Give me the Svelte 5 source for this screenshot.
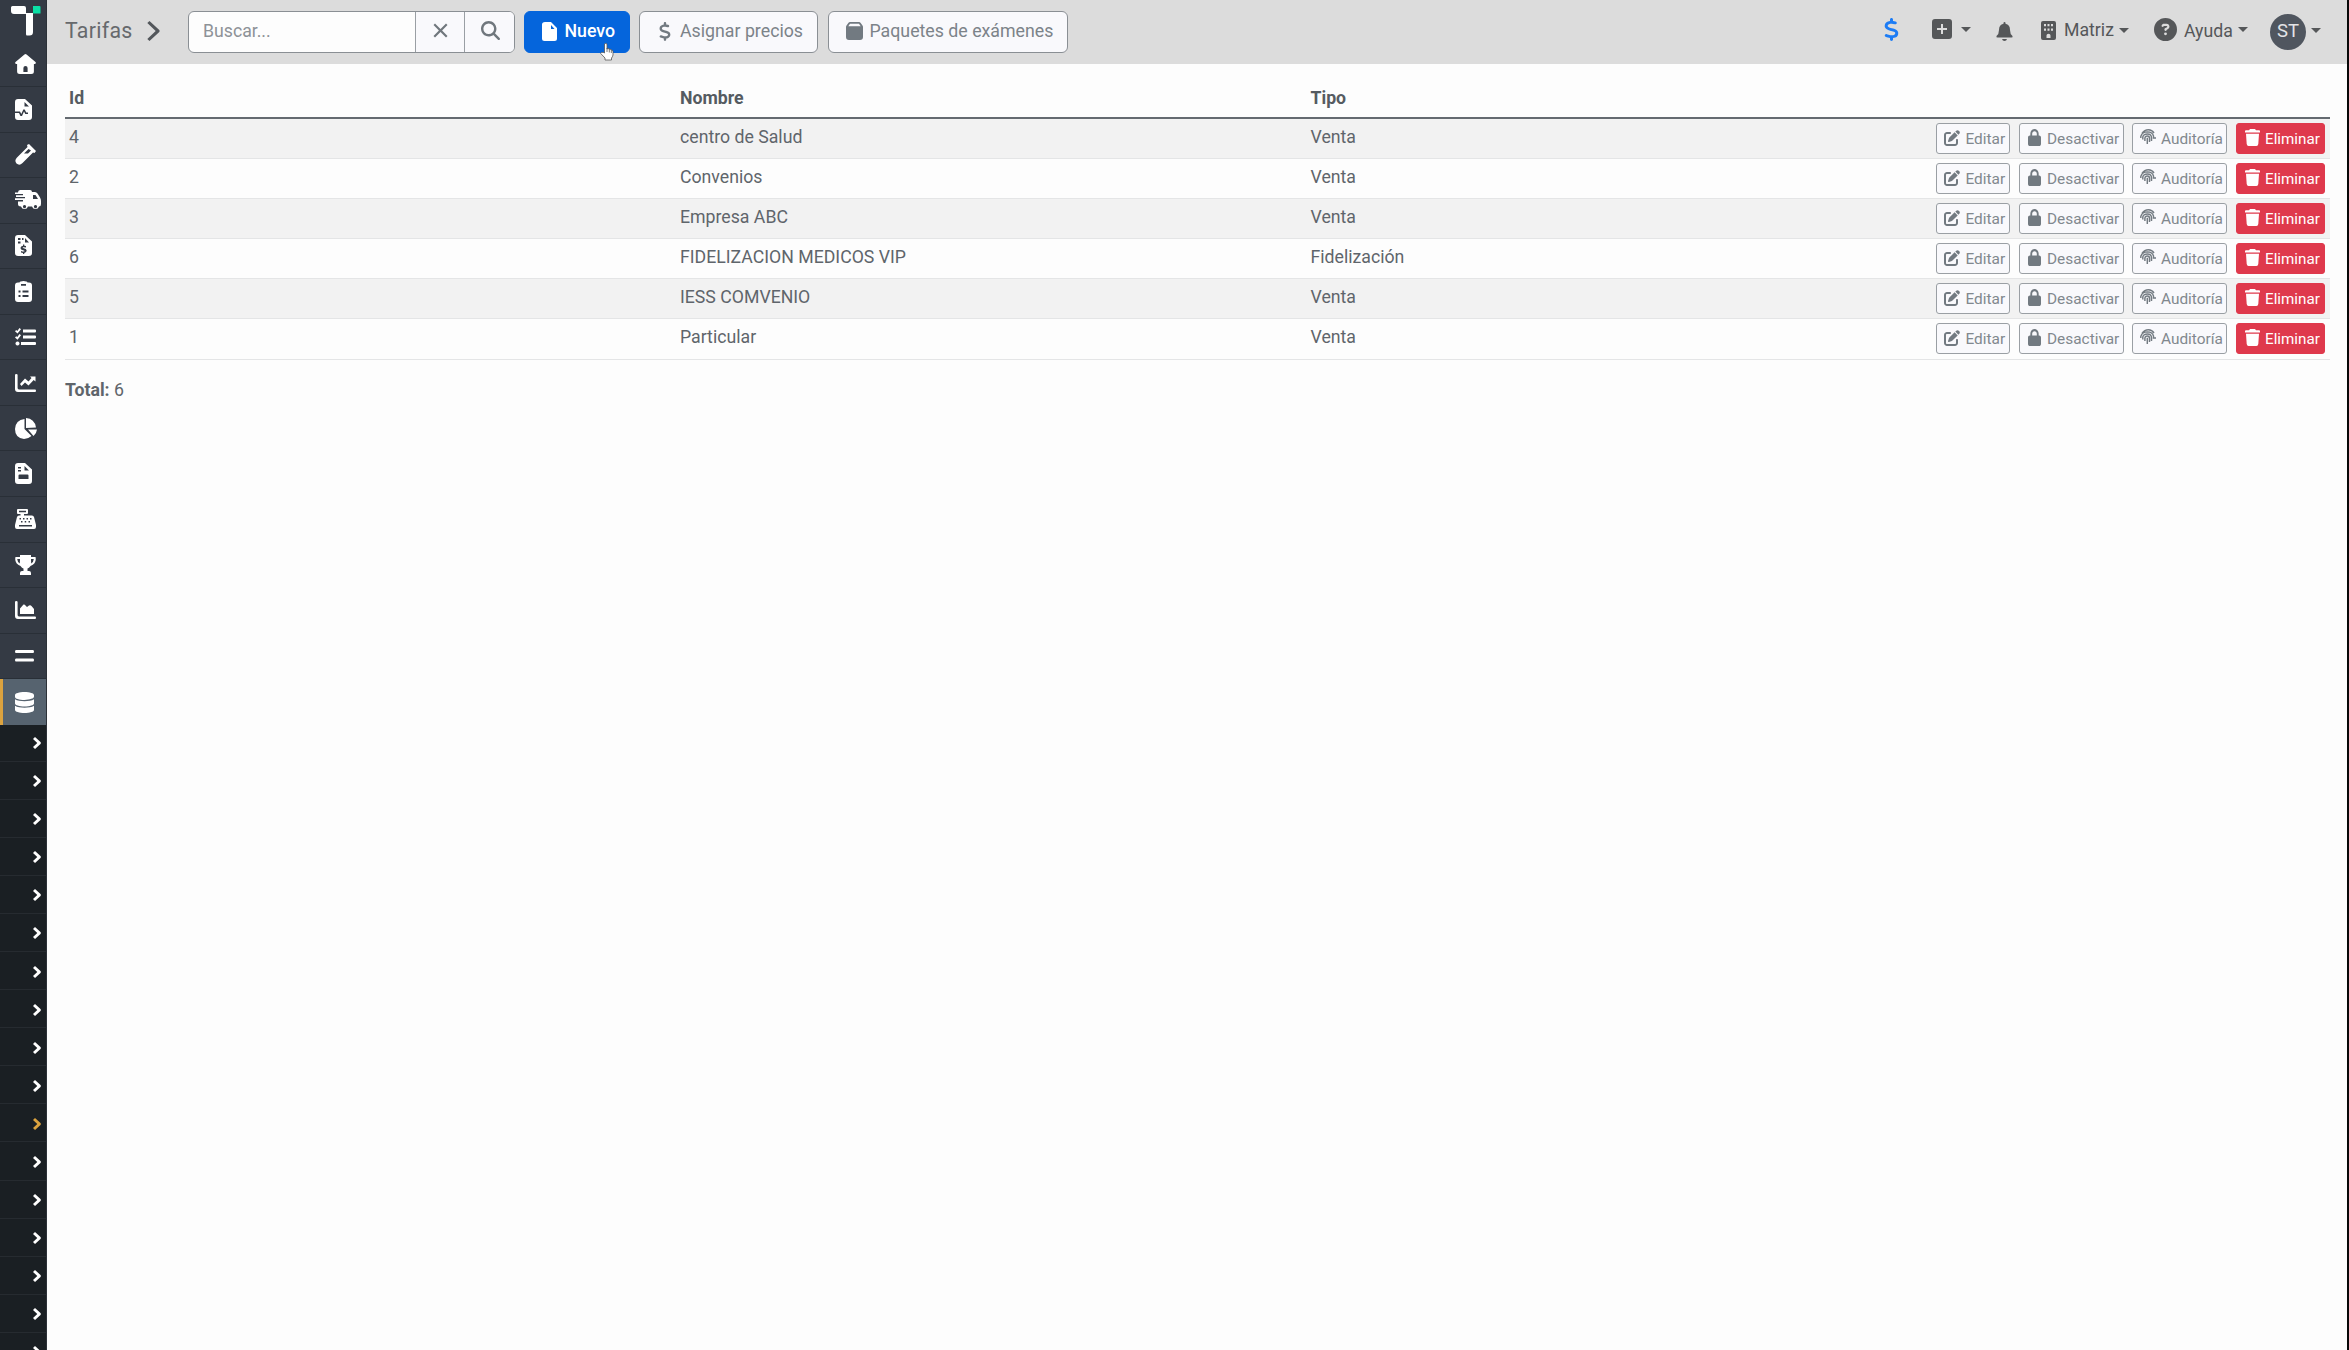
<script>
  const icons = {
    home: ['0 0 20 20', 'M9 .5Q10 -.4 11 .5L19.5 8Q20.5 9.4 19 10H18V17.500Q18 20 15.500 20H4.500Q2 20 2 17.500V10H1Q-.5 9.400 .5 8ZM8 18H12V14Q12 12 10 12T8 14Z'],
    filePulse: ['0 0 17 21', 'M3 0H10L17 6.500V18Q17 21 14 21H3Q0 21 0 18V14H4L5.500 17H7L9 12.500L10.300 15H13V13.500H11.200L9.700 10.500H8.300L6.300 15L5 12.500H0V3Q0 0 3 0ZM9.500 3V7.500H14Z'],
    vial: ['0 0 21 21', 'M12 1L14 0L21 7L19.500 9L18 8.500L7.500 19Q4.500 22 1.500 19.500Q-1 16.500 2 13.500L12.500 3ZM13.500 5L9 9.500H13L16 6.500Z'],
    truck: ['0 0 26 20', 'M5 0H15Q17 0 17 2H20Q21.500 2 22.500 3.500L25 7.500Q26 9 26 11V14Q26 16.500 24 16.500A3.700 3.700 0 0 1 17 16.500H13A3.700 3.700 0 0 1 6 16.500Q3 16.500 3 14V11.500H8V10H0V8.300H10V7H1V5.300H8V4H0V2.500H3Q3 0 5 0ZM18 5V9H23L20.500 5ZM9.500 15A1.600 1.600 0 1 0 9.510 15ZM20.500 15A1.600 1.600 0 1 0 20.510 15Z'],
    invoice: ['0 0 17 21', 'M3 0H10L17 6.500V18Q17 21 14 21H3Q0 21 0 18V3Q0 0 3 0ZM3 3V5H5.500V3ZM7 3V5H8.500V3ZM3 6.500V8.500H5.500V6.500ZM10 3V7.500H14ZM8 9.500V10.700Q5.500 11 5.500 13Q5.500 14.700 8 15.200Q10 15.600 9.500 16.200Q8.500 17 6 16V17.600L8 18V19H9.300V18Q11.700 17.600 11.700 15.600Q11.500 13.800 8.700 13.300Q7 12.700 8 12.300Q9 12 11 12.500V11L9.300 10.700V9.500Z'],
    clipboard: ['0 0 17 21', 'M4.500 1.500Q5 0 8.500 0T12.500 1.500H14Q17 1.500 17 4.500V18Q17 21 14 21H3Q0 21 0 18V4.500Q0 1.500 3 1.500ZM6 3V4.800H11V3ZM3.500 9.500V11.500H5.500V9.500ZM7.500 9.500V11.500H13.500V9.500ZM3.500 14V16H5.500V14ZM7.500 14V16H13.500V14Z'],
    tasks: ['0 0 21 18', 'M4.500 0L6 1.300L2.500 5.500L0 3.300L1.200 2L2.300 3ZM4.500 6L6 7.300L2.500 11.800L0 9.500L1.200 8.200L2.300 9ZM8 1.500H20Q21 1.500 21 2.500V3.500Q21 4.500 20 4.500H8ZM8 7.500H20Q21 7.500 21 8.500V9.500Q21 10.500 20 10.500H8ZM6 14H20Q21 14 21 15V16Q21 17 20 17H6ZM2.500 13.500A2 2 0 1 0 2.510 13.500Z'],
    chartLine: ['0 0 21 18', 'M0 1Q0 0 1.300 0T2.600 1V14Q2.600 15.400 4 15.400H20Q21 15.400 21 16.700T20 18H3Q0 18 0 15ZM5 10L10 4.500L13.500 7.500L16.500 4L15 2.500H20.500V7.500L18.700 6L13.500 11.500L10 8.500L6.500 12Z'],
    pie: ['0 0 22 21', 'M9.500 1V11L16.500 18Q13 21 9 21Q0 20 0 11Q.5 2 9.500 1ZM11 0Q19.500 .5 21 9.500L11 10ZM13 11.500H22Q21.500 15.500 18.500 18Z'],
    fileBox: ['0 0 17 21', 'M3 0H10L17 6.500V18Q17 21 14 21H3Q0 21 0 18V3Q0 0 3 0ZM3 4V5.500H6V4ZM3 7V8.500H6V7ZM9.500 3V7.500H14ZM4.500 11.500Q3.500 11.500 3.500 12.500V16H13.500V12.500Q13.500 11.500 12.500 11.500Z'],
    register: ['0 0 21 20', 'M3 0H12Q13 0 13 1V4Q13 5 12 5H9V6.500H17Q18.500 6.500 19 8L21 16V18Q21 20 19 20H2Q0 20 0 18V16L2 8Q2.500 6.500 4 6.500H5.500V5H3Q2 5 2 4V1Q2 0 3 0ZM4 1.800V3.200H11V1.800ZM4.500 9V10.500H6V9ZM8 9V10.500H9.500V9ZM11.500 9V10.500H13V9ZM15 9V10.500H16.500V9ZM6 12V13.500H7.500V12ZM9.700 12V13.500H11.200V12ZM13.500 12V13.500H15V12ZM4 16V17.500H17V16Z'],
    trophy: ['0 0 21 20', 'M5 0H16V2H20.500Q22 8 15.500 11Q14 13 12.500 13.500V16H14Q16 16 16 18V20H5V18Q5 16 7 16H8.500V13.500Q7 13 5.500 11Q-1 8 .5 2H5ZM2.200 4Q2.400 7 4.800 8.400Q5 6 5 4ZM18.800 4H16Q16 6 16.200 8.400Q18.600 7 18.800 4Z'],
    area: ['0 0 21 18', 'M0 1Q0 0 1.300 0T2.600 1V14Q2.600 15.400 4 15.400H20Q21 15.400 21 16.700T20 18H3Q0 18 0 15ZM5 13V7.500L8.500 3.500Q9.500 3 10.500 4.500L12 6L14 4.500Q15.500 3.800 16.500 5L19 8V13Z'],
    equals: ['0 0 19 12', 'M1 0H18Q19 0 19 1.500T18 3H1Q0 3 0 1.500T1 0ZM1 8.500H18Q19 8.500 19 10T18 11.500H1Q0 11.500 0 10T1 8.500Z'],
    database: ['0 0 448 512', 'M448 73.100v45.700C448 159.100 347.700 192 224 192S0 159.100 0 118.900V73.100C0 32.900 100.300 0 224 0s224 32.900 224 73.100zM448 176v102.900C448 319.100 347.700 352 224 352S0 319.100 0 278.900V176c48.100 33.100 136.200 48.600 224 48.600S399.900 209.100 448 176zm0 160v102.900C448 479.100 347.700 512 224 512S0 479.100 0 438.900V336c48.100 33.100 136.200 48.600 224 48.600S399.900 369.100 448 336z'],
    dollar: ['0 0 320 512', 'M160 0c17.700 0 32 14.300 32 32V67.700c1.600 .2 3.100 .4 4.700 .7c.4 .1 .7 .1 1.100 .2l48 8.800c17.400 3.200 28.900 19.900 25.700 37.200s-19.900 28.900-37.200 25.700l-47.500-8.700c-31.300-4.600-58.900-1.500-78.300 6.200s-27.200 18.300-29 28.100c-2 10.700-.5 16.700 1.200 20.400c1.800 3.900 5.500 8.300 12.800 13.200c16.300 10.700 41.300 17.700 73.700 26.300l2.900 .8c28.600 7.600 63.600 16.800 89.600 33.800c14.200 9.300 27.600 21.900 35.900 39.500c8.500 17.900 10.300 37.900 6.400 59.200c-6.900 38-33.100 63.400-65.600 76.700c-13.700 5.600-28.600 9.200-44.400 11V480c0 17.700-14.300 32-32 32s-32-14.300-32-32V445.100c-24.400-3.800-66-14.500-93-26.500c-16.100-7.200-23.400-26.100-16.200-42.200s26.100-23.400 42.200-16.200c20.900 9.300 55.300 18.500 75.200 21.600c31.900 4.700 58.200 2 76-5.300c16.900-6.900 24.600-16.900 26.800-28.900c1.900-10.600 .4-16.700-1.300-20.400c-1.900-4-5.600-8.400-13-13.300c-16.400-10.700-41.500-17.700-74-26.300l-2.800-.7C119.400 279.300 84.400 270 58.400 253c-14.200-9.300-27.500-22-35.800-39.600c-8.400-17.900-10.100-37.900-6.100-59.200C23.700 116 52.300 91.200 84.800 78.300c13.300-5.300 27.900-8.900 43.200-11V32c0-17.700 14.300-32 32-32z'],
    search: ['0 0 512 512', 'M416 208c0 45.900-14.900 88.300-40 122.700L502.600 457.400c12.500 12.500 12.500 32.800 0 45.300s-32.800 12.500-45.300 0L330.700 376c-34.400 25.200-76.800 40-122.700 40C93.100 416 0 322.900 0 208S93.100 0 208 0S416 93.100 416 208zM208 352a144 144 0 1 0 0-288 144 144 0 1 0 0 288z'],
    times: ['0 0 15 15', 'M2 .5L7.500 5.900L13 .5L14.500 2L9.100 7.500L14.500 13L13 14.500L7.500 9.100L2 14.500L.5 13L5.900 7.500L.5 2Z'],
    chevron: ['0 0 13 20', 'M2.500 0L12.300 9Q13 10 12.300 11L2.500 20L.3 18L8.700 10L.3 2Z'],
    small: ['0 0 8 12', 'M2 0L7.500 5Q8.200 6 7.500 7L2 12L0 10L4.300 6L0 2Z'],
    file: ['0 0 15 19', 'M3 0H9L15 6V16.500Q15 19 12.500 19H2.500Q0 19 0 16.500V2.500Q0 0 3 0ZM9 3V7H12.500Z'],
    box: ['0 0 17 18', 'M4 0H13Q14 0 14.700 1L16.500 3.500Q17 4 17 5V15Q17 18 14 18H3Q0 18 0 15V5Q0 4 .5 3.500L2.300 1Q3 0 4 0ZM4 1.800L2.300 4.200H14.700L13 1.800Z'],
    plus: ['0 0 20 20', 'M3 0H17Q20 0 20 3V17Q20 20 17 20H3Q0 20 0 17V3Q0 0 3 0ZM9 5V9H5V11H9V15H11V11H15V9H11V5Z'],
    bell: ['0 0 17 19', 'M7.500 1Q7.500 0 8.500 0T9.500 1V1.700Q14 2.500 14 8Q14 12 16.500 14Q17 15.500 15.500 15.500H1.500Q0 15.500 .5 14Q3 12 3 8Q3 2.500 7.500 1.700ZM6 17H11Q10.500 19 8.500 19T6 17Z'],
    building: ['0 0 15 19', 'M2 0H13Q15 0 15 2V17Q15 19 13 19H2Q0 19 0 17V2Q0 0 2 0ZM3 3V5.200H5V3ZM6.500 3V5.200H8.500V3ZM10 3V5.200H12V3ZM3 7.500V9.700H5V7.500ZM6.500 7.500V9.700H8.500V7.500ZM10 7.500V9.700H12V7.500ZM5.500 17H9.500V14.500Q9.500 12.800 7.500 12.800T5.500 14.500Z'],
    help: ['0 0 512 512', 'M256 0a256 256 0 1 0 0 512A256 256 0 1 0 256 0zM169.800 165.300c7.900-22.300 29.100-37.300 52.800-37.300h58.300c34.900 0 63.100 28.300 63.100 63.100c0 22.600-12.100 43.500-31.700 54.800L280 264.400c-.2 13-10.900 23.600-24 23.600c-13.300 0-24-10.700-24-24V250.500c0-8.600 4.600-16.500 12.100-20.800l44.300-25.400c4.700-2.700 7.600-7.700 7.600-13.100c0-8.400-6.800-15.100-15.100-15.100H222.600c-3.400 0-6.400 2.100-7.500 5.300l-.4 1.200c-4.400 12.500-18.200 19-30.600 14.600s-19-18.200-14.600-30.600zM256 320a32 32 0 1 0 0 64 32 32 0 1 0 0-64z'],
    edit: ['0 0 512 512', 'M471.600 21.700c-21.900-21.900-57.300-21.900-79.200 0L362.300 51.700l97.900 97.900 30.100-30.100c21.900-21.900 21.900-57.300 0-79.200L471.600 21.700zm-299.200 220c-6.100 6.100-10.800 13.600-13.500 21.900l-29.600 88.800c-2.900 8.600-.6 18.100 5.800 24.600s15.900 8.700 24.600 5.800l88.800-29.600c8.200-2.700 15.700-7.400 21.900-13.500L437.700 172.300 339.700 74.300 172.400 241.700zM96 64C43 64 0 107 0 160V416c0 53 43 96 96 96H352c53 0 96-43 96-96V320c0-17.700-14.300-32-32-32s-32 14.300-32 32v96c0 17.700-14.300 32-32 32H96c-17.700 0-32-14.300-32-32V160c0-17.700 14.300-32 32-32h96c17.700 0 32-14.300 32-32s-14.300-32-32-32H96z'],
    lock: ['0 0 448 512', 'M144 144v48H304V144c0-44.200-35.800-80-80-80s-80 35.800-80 80zM80 192V144C80 64.500 144.500 0 224 0s144 64.500 144 144v48h16c35.300 0 64 28.700 64 64V448c0 35.300-28.700 64-64 64H64c-35.300 0-64-28.700-64-64V256c0-35.300 28.700-64 64-64H80z'],
    trash: ['0 0 15 17', 'M5 0H10L11 1.300H14Q15 1.300 15 2.300V3.500H0V2.300Q0 1.300 1 1.300H4ZM1 4.700H14L13.300 15Q13 17 11.500 17H3.500Q2 17 1.700 15Z']
  }

  const menu = [
    ['home', 21, 20], ['filePulse', 17, 21], ['vial', 21, 21], ['truck', 26, 20],
    ['invoice', 17, 21], ['clipboard', 17, 21], ['tasks', 21, 18], ['chartLine', 21, 18],
    ['pie', 22, 21], ['fileBox', 17, 21], ['register', 21, 20], ['trophy', 21, 20],
    ['area', 21, 18], ['equals', 19, 12], ['database', 19, 21]
  ]
  const rows = [
    { id: 4, nombre: 'centro de Salud', tipo: 'Venta' },
    { id: 2, nombre: 'Convenios', tipo: 'Venta' },
    { id: 3, nombre: 'Empresa ABC', tipo: 'Venta' },
    { id: 6, nombre: 'FIDELIZACION MEDICOS VIP', tipo: 'Fidelización' },
    { id: 5, nombre: 'IESS COMVENIO', tipo: 'Venta' },
    { id: 1, nombre: 'Particular', tipo: 'Venta' }
  ]
  let search = $state('')
</script>

{#snippet icon(name, w, h)}
  <svg class="icon" width={w} height={h} viewBox={icons[name][0]} preserveAspectRatio="none"><path fill-rule="evenodd" d={icons[name][1]} /></svg>
{/snippet}

{#snippet finger()}
  <svg class="finger" width="16" height="16" viewBox="0 0 16 16">
    <path d="M2 4.500Q4.500 .8 8.500 .8Q12 .8 14 4M.8 9V7.500Q2 3 7.500 2.900Q12.500 3 13.500 7V9H16M2.800 10.500V8Q3.500 5 7.500 5Q11.500 5 11.500 9V12M4.900 12V9Q5.200 7 7.500 7Q9.500 7 9.500 9.500V13M7.300 8.800V15" />
  </svg>
{/snippet}

<div class="page">
  <aside>
    <svg class="logo" width="30" height="30" viewBox="0 0 30 30">
      <path fill="#fff" d="M1.500 0H13Q15 0 15 2V7H22V26Q22 29.500 18.500 29.500H16Q15 29.500 15 28V8H3Q0 8 0 5V1.500Q0 0 1.500 0Z" />
      <path fill="#0be0a5" d="M22 0H28.500Q29.500 0 29.500 1V7.500H22Z" />
    </svg>
    <nav>
      {#each menu as [name, w, h]}
        <a class="item" class:active={name === 'database'} href="#{name}" aria-label={name}>{@render icon(name, w, h)}</a>
      {/each}
    </nav>
    <div class="sub">
      {#each Array(17) as _, i}
        <a class="subitem" class:current={i === 10} href="#sub{i}" aria-label="sub {i}">{@render icon('small', 8, 12)}</a>
      {/each}
    </div>
  </aside>

  <main>
    <header>
      <h1>Tarifas</h1>
      <span class="crumb">{@render icon('chevron', 13, 20)}</span>
      <div class="search">
        <input placeholder="Buscar..." bind:value={search} />
        <button aria-label="Limpiar" onclick={() => (search = '')}>{@render icon('times', 15, 15)}</button>
        <button class="find" aria-label="Buscar">{@render icon('search', 19, 19)}</button>
      </div>
      <button class="btn nuevo">{@render icon('file', 15, 19)}<span>Nuevo</span>
        <svg class="cursor" width="14" height="18" viewBox="0 0 14 18"><path d="M4.500 1Q6 -.3 7 1V6L8 5.500L9.500 6L11 6.500L13 8V12Q12.500 14 11.500 15V17H5V15L.7 10.500Q1 8.500 3.500 9.500L4.500 10Z" /><path d="M7 5V9M9.300 6V9.500M11.300 7V10" /></svg>
      </button>
      <button class="btn asignar">{@render icon('dollar', 12, 19)}<span>Asignar precios</span></button>
      <button class="btn paquetes">{@render icon('box', 17, 18)}<span>Paquetes de exámenes</span></button>
      <div class="tools">
        <span class="tool money">{@render icon('dollar', 15, 23)}</span>
        <span class="tool add">{@render icon('plus', 20, 20)}<i></i></span>
        <span class="tool alert">{@render icon('bell', 17, 19)}</span>
        <span class="tool branch">{@render icon('building', 15, 19)}<span>Matriz</span><i></i></span>
        <span class="tool ayuda">{@render icon('help', 23, 23)}<span>Ayuda</span><i></i></span>
        <span class="tool user"><b>ST</b><i></i></span>
      </div>
    </header>

    <section>
      <div class="row head"><div>Id</div><div>Nombre</div><div>Tipo</div></div>
      {#each rows as r}
        <div class="row">
          <div>{r.id}</div>
          <div>{r.nombre}</div>
          <div>{r.tipo}</div>
          <div class="actions">
            <button class="editar">{@render icon('edit', 16, 16)}<span>Editar</span></button>
            <button class="desactivar">{@render icon('lock', 13, 17)}<span>Desactivar</span></button>
            <button class="auditoria">{@render finger()}<span>Auditoría</span></button>
            <button class="eliminar">{@render icon('trash', 15, 17)}<span>Eliminar</span></button>
          </div>
        </div>
      {/each}
      <p class="total"><strong>Total:</strong> {rows.length}</p>
    </section>
  </main>
</div>

<style>
  :global(body) { background:#fdfdfd; }
  .page { display:flex;height:1350px;overflow:hidden;box-sizing:border-box;border-right:2px solid #080808;background:#fdfdfd;font-family:Roboto,sans-serif;font-size:17.7px;color:#5f656b; }
  .page * { box-sizing:border-box; }
  .icon { display:block;flex:none;fill:currentColor; }
  button { font-family:inherit;margin:0;padding:0;display:flex;align-items:center; }
  span { white-space:nowrap; }

  aside { flex:0 0 47px;background:#343a44;overflow:hidden;height:1350px;border-right:1px solid #2c3138; }
  .logo { display:block;margin:6px 0 5.4px 11px; }
  .item { display:flex;align-items:center;height:45.57px;padding-left:15px;color:#fff;border-bottom:1px solid #292f37; }
  .item.active { background:#56636f;border-left:3px solid #dca33f;border-bottom:0;padding-left:12px;position:relative; }
  .sub { background:#1a1f23;margin-top:-1.4px; }
  .subitem { display:flex;align-items:center;height:38.1px;padding:2px 0 0 32.5px;color:#fff;border-bottom:1px solid #262b30; }
  .subitem.current { color:#dca33f; }

  main { flex:1;min-width:0; }
  header { display:flex;height:64px;background:#dcdcdc;padding:11px 26px 0 18px; }
  h1 { margin:0;width:82px;font-size:21.3px;font-weight:400;line-height:40px;letter-spacing:.3px;color:#66696c; }
  .crumb { width:40.5px;padding-top:10px;color:#53575b; }
  .search { display:flex;width:327px;height:42px;border:1px solid #8a8f94;border-radius:6px;background:#fdfdfd;overflow:hidden; }
  input { width:226px;border:0;background:none;padding:0 0 2px 14.5px;font-family:inherit;font-size:17.7px;outline:none; }
  input::placeholder { color:#8d9297;opacity:1; }
  .search button { width:50px;border:0;border-left:1px solid #9a9fa4;background:#f9f9fc;color:#70777d;padding:0 0 3px 17px; }
  .search .find { padding-left:15.5px; }
  .btn { height:42px;border:1px solid #8a8f94;border-radius:6px;background:#f9f9fc;color:#7c8389;font-size:17.75px;padding-bottom:2px; }
  .btn .icon { color:#727a81; }
  .nuevo { position:relative;width:106px;margin-left:9px;padding-left:17px;gap:8px;background:#0565dc;border-color:#0565dc;color:#fff;font-weight:500; }
  .nuevo .icon { color:#fff; }
  .cursor { position:absolute;left:75px;top:31px;fill:#fff;stroke:#555;stroke-width:.8; }
  .asignar { width:179px;margin-left:9.5px;padding-left:19px;gap:9px; }
  .paquetes { width:240px;margin-left:9.5px;padding-left:17px;gap:7px; }

  .tools { margin-left:auto;display:flex;height:40px;color:#555759; }
  .tool { display:flex;align-items:center; }
  .tool i { width:0;height:0;border:5px solid transparent;border-top-color:currentColor;border-bottom:0; }
  .money { width:47.5px;color:#1c7cf5;padding-bottom:4px; }
  .add { width:64.5px;gap:9px;padding-bottom:4px; }
  .alert { width:45px;padding-top:1px; }
  .branch { width:113px;padding-bottom:2px; }
  .branch span { width:55px;margin-left:8px; }
  .ayuda { width:116px;padding-bottom:4px; }
  .ayuda span { width:54px;margin-left:7px;padding-top:3px; }
  .user { gap:5px;width:51px;padding-top:2px; }
  .user b { width:36px;height:36px;border-radius:50%;background:#50565f;color:#e4e4e6;font-size:18.5px;font-weight:400;line-height:34px;text-align:center; }
  .user i { margin-bottom:4px; }

  section { padding:15px 17px 0 18px; }
  .row { display:grid;grid-template-columns:611px 630.5px 1fr auto;height:40.1px;border-bottom:1px solid #e4e5e6;padding:0 5px 0 4px;line-height:37.5px; }
  .row:nth-child(even) { background:#f2f2f2; }
  .head { height:40px;font-weight:700;line-height:39px;border-bottom:2px solid #646a70;color:#555b61; }
  .actions { display:flex;padding-top:4px; }
  .actions button { height:31px;border:1px solid #9a9fa4;border-radius:3px;background:#f9f9fc;color:#81888e;font-size:15.4px;padding-left:7px;line-height:20px; }
  .actions .icon { color:#727a81;margin-bottom:2px; }
  .actions .editar { width:74px;gap:5.5px;margin-right:9px; }
  .actions .desactivar { width:105px;padding-left:8px;gap:6px;margin-right:8px; }
  .actions .auditoria { width:95px;gap:5px;margin-right:9px; }
  .actions .eliminar { width:89px;padding-left:8px;gap:5px;background:#df394c;border-color:#df394c;color:#fff;font-size:15.2px; }
  .actions .eliminar .icon { color:#fff; }
  .finger { flex:none;fill:none;stroke:#737b82;stroke-width:1.45;margin-bottom:3px; }
  .total { margin:19px 0 0;line-height:22px; }
</style>
